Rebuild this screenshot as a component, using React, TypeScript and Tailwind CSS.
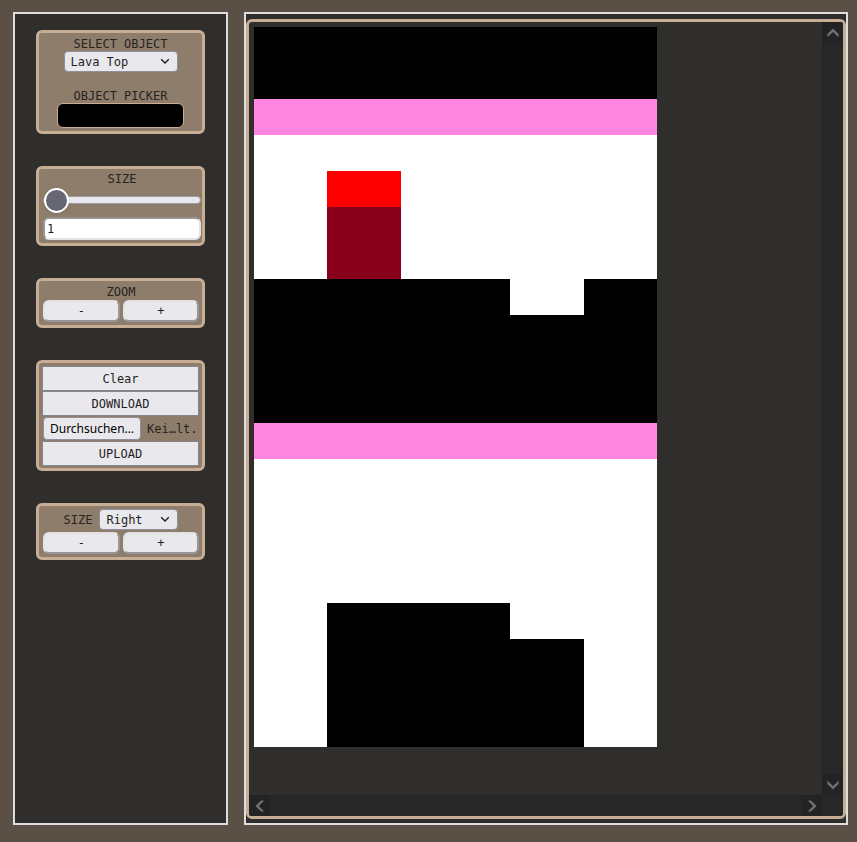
import { useState } from "react";
import type { ReactNode } from "react";

const MONO = "font-['DejaVu_Sans_Mono','Liberation_Mono',monospace]";

function Card({ children }: { children: ReactNode }) {
  return (
    <section className="rounded-md border-3 border-[#c8ad95] bg-[#8f7d6b] text-center">
      {children}
    </section>
  );
}

function Chevron({ className }: { className: string }) {
  return (
    <svg viewBox="0 0 10 10" className={className} fill="none" stroke="currentColor" aria-hidden="true">
      <path d="M1.2 3.2 5 7l3.8-3.8" strokeWidth="1.4" />
    </svg>
  );
}

function Picker({ id, options, width }: { id: string; options: string[]; width: string }) {
  return (
    <span className={`relative inline-block h-[21px] ${width}`}>
      <select
        id={id}
        className="block h-full w-full appearance-none rounded border border-[#8f8f9d] bg-[#e9e9ed] pl-1.5 text-[#1f1f1f]"
      >
        {options.map((option) => (
          <option key={option}>{option}</option>
        ))}
      </select>
      <Chevron className="pointer-events-none absolute top-[5px] right-2 size-2.5 text-[#1f1f1f]" />
    </span>
  );
}

function StepButtons({ name }: { name: string }) {
  const style =
    "h-[22px] flex-1 rounded-md border-2 border-t-[#e3e3e3] border-r-[#979797] border-b-[#979797] border-l-[#e3e3e3] bg-[#e9e9ed] leading-[18px] text-[#1f1f1f]";
  return (
    <div className="flex gap-[3px]">
      <button type="button" aria-label={`${name} decrease`} className={style}>
        -
      </button>
      <button type="button" aria-label={`${name} increase`} className={style}>
        +
      </button>
    </div>
  );
}

function WideButton({ children }: { children: ReactNode }) {
  return (
    <button
      type="button"
      className="block h-[25px] w-full border border-[#85858c] bg-[#e9e9ed] text-[#1f1f1f]"
    >
      {children}
    </button>
  );
}

const blocks = [
  "col-span-11 col-start-1 row-span-2 row-start-1 bg-black",
  "col-span-11 col-start-1 row-start-3 bg-[#ff85df]",
  "col-span-2 col-start-3 row-start-5 bg-[#ff0000]",
  "col-span-2 col-start-3 row-span-2 row-start-6 bg-[#88001b]",
  "col-span-7 col-start-1 row-start-8 bg-black",
  "col-span-2 col-start-10 row-start-8 bg-black",
  "col-span-11 col-start-1 row-span-3 row-start-9 bg-black",
  "col-span-11 col-start-1 row-start-12 bg-[#ff85df]",
  "col-span-5 col-start-3 row-start-17 bg-black",
  "col-span-7 col-start-3 row-span-3 row-start-[18] bg-black",
];

function Level() {
  return (
    <div className="grid h-[720px] w-[403px] grid-cols-11 grid-rows-[repeat(20,36px)] bg-white">
      {blocks.map((block) => (
        <div key={block} className={block} />
      ))}
    </div>
  );
}

function ScrollButton({ label, turn }: { label: string; turn: string }) {
  return (
    <button
      type="button"
      aria-label={label}
      className="flex size-[21px] items-center justify-center bg-[#232325] text-[#707070]"
    >
      <svg viewBox="0 0 12 12" className={`size-3 ${turn}`} fill="currentColor" aria-hidden="true">
        <path d="M6 1.4 11.6 7v3.2L6 5 .4 10.2V7z" />
      </svg>
    </button>
  );
}

export default function App() {
  const [size, setSize] = useState("1");
  return (
    <div
      className={`flex h-screen gap-4 bg-[#5a5046] pt-3 pr-[9px] pb-[17px] pl-[13px] text-xs leading-[14px] text-[#262421] ${MONO}`}
    >
      <aside className="flex w-[215px] shrink-0 flex-col gap-8 border-2 border-[#dddddd] bg-[#2f2e2c] px-[21px] pt-4">
        <Card>
          <div className="flex flex-col items-center pt-1 pb-[3px]">
            <label htmlFor="object">SELECT OBJECT</label>
            <Picker id="object" options={["Lava Top", "Lava", "Ground"]} width="w-[114px]" />
            <span className="mt-[17px]">OBJECT PICKER</span>
            <button
              type="button"
              aria-label="Object picker"
              className="h-[25px] w-[127px] rounded-md border border-[#c8ad95] bg-black"
            />
          </div>
        </Card>

        <Card>
          <div className="flex flex-col pt-[3px] pr-px pb-[3px] pl-1">
            <label htmlFor="size">SIZE</label>
            <input
              id="size"
              type="range"
              min="1"
              max="20"
              value={size}
              onChange={(event) => setSize(event.target.value)}
              className="mt-px h-[25px] w-full appearance-none bg-transparent [&::-webkit-slider-runnable-track]:h-2 [&::-webkit-slider-runnable-track]:rounded-full [&::-webkit-slider-runnable-track]:border [&::-webkit-slider-runnable-track]:border-[#9c9ca6] [&::-webkit-slider-runnable-track]:bg-[#e9e9ed] [&::-webkit-slider-thumb]:-mt-[9px] [&::-webkit-slider-thumb]:size-[25px] [&::-webkit-slider-thumb]:appearance-none [&::-webkit-slider-thumb]:rounded-full [&::-webkit-slider-thumb]:border-2 [&::-webkit-slider-thumb]:border-white [&::-webkit-slider-thumb]:bg-[#676774] [&::-webkit-slider-thumb]:shadow"
            />
            <input
              type="text"
              aria-label="Size value"
              value={size}
              onChange={(event) => setSize(event.target.value)}
              className="mt-[5px] h-[23px] w-full rounded-md border-2 border-t-[#979797] border-r-[#e3e3e3] border-b-[#e3e3e3] border-l-[#979797] bg-white pl-0.5 text-[#1f1f1f]"
            />
          </div>
        </Card>

        <Card>
          <div className="flex flex-col pt-1 pr-[3px] pb-[3px] pl-1">
            <span className="pb-px">ZOOM</span>
            <StepButtons name="Zoom" />
          </div>
        </Card>

        <Card>
          <div className="flex flex-col px-[3px] pt-[3px] pb-0.5">
            <WideButton>Clear</WideButton>
            <WideButton>DOWNLOAD</WideButton>
            <div className="flex h-[25px] items-center gap-1.5 pl-px">
              <input id="file" type="file" className="peer sr-only" />
              <label
                htmlFor="file"
                className="h-[23px] w-[98px] shrink-0 rounded border border-[#8f8f9d] bg-[#e9e9ed] font-['Noto_Sans',sans-serif] leading-[21px] text-black"
              >
                Durchsuchen…
              </label>
              <span className="whitespace-nowrap">Kei…lt.</span>
            </div>
            <WideButton>UPLOAD</WideButton>
          </div>
        </Card>

        <Card>
          <div className="flex flex-col gap-0.5 py-[3px] pr-[3px] pl-1">
            <div className="flex items-center justify-center gap-[7px]">
              <label htmlFor="side">SIZE</label>
              <Picker id="side" options={["Right", "Left", "Top", "Bottom"]} width="w-[79px]" />
            </div>
            <StepButtons name="Size" />
          </div>
        </Card>
      </aside>

      <main className="flex min-w-0 flex-1 flex-col border-2 border-[#dddddd] bg-[#2f2e2c] pt-[5px] pb-1">
        <div className="grid min-h-0 flex-1 grid-cols-[1fr_21px] grid-rows-[1fr_21px] overflow-hidden rounded-md border-3 border-[#c8ad95]">
          <div className="min-h-0 min-w-0 overflow-hidden p-[5px]">
            <Level />
          </div>
          <div className="flex flex-col justify-between bg-[#272727]">
            <ScrollButton label="Scroll up" turn="" />
            <ScrollButton label="Scroll down" turn="rotate-180" />
          </div>
          <div className="flex justify-between bg-[#272727]">
            <ScrollButton label="Scroll left" turn="-rotate-90" />
            <ScrollButton label="Scroll right" turn="rotate-90" />
          </div>
          <div className="bg-[#272727]" />
        </div>
      </main>
    </div>
  );
}
